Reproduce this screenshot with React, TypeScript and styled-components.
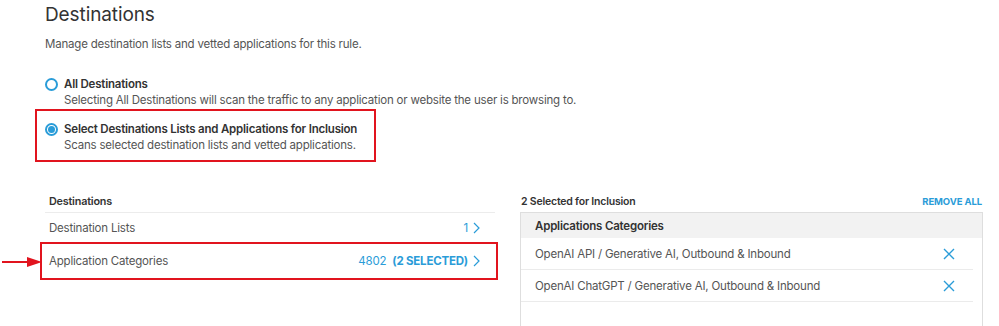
import React from "react";
import styled, { createGlobalStyle } from "styled-components";

const GlobalStyle = createGlobalStyle`
  html, body {
    margin: 0;
    padding: 0;
    background: #ffffff;
  }
  body {
    font-family: Inter, "Noto Sans", "Liberation Sans", sans-serif;
    color: #444;
    letter-spacing: -0.2px;
    -webkit-font-smoothing: antialiased;
  }
`;

const BLUE = "#2a9cd8";
const RED = "#e1141e";

export const Page = styled.div`
  position: relative;
  width: 999px;
  height: 326px;
  overflow: hidden;
  padding: 3px 16px 0 45px;
  box-sizing: border-box;
`;

export const Title = styled.h1`
  margin: 0;
  font-size: 19px;
  line-height: 24px;
  font-weight: 400;
  letter-spacing: -0.1px;
  color: #333;
`;

export const Subtitle = styled.p`
  margin: 9px 0 0;
  font-size: 11.5px;
  line-height: 16px;
  color: #555;
`;

export const Options = styled.div`
  display: flex;
  flex-direction: column;
  align-items: flex-start;
  gap: 13px;
  margin-top: 24px;
`;

export const Option = styled.div<{ $highlighted?: boolean }>`
  display: flex;
  align-items: flex-start;
  gap: 6px;

  ${({ $highlighted }) =>
    $highlighted &&
    `
    border: 2px solid ${RED};
    padding: 10px 17px 7px 8px;
    margin: -12px 0 0 -10px;
  `}
`;

export const Radio = styled.span<{ $checked?: boolean }>`
  flex: none;
  width: 13px;
  height: 13px;
  margin-top: 2px;
  box-sizing: border-box;
  border-radius: 50%;
  border: 2px solid ${BLUE};
  display: flex;
  align-items: center;
  justify-content: center;

  &::after {
    content: "";
    width: 7px;
    height: 7px;
    border-radius: 50%;
    background: ${BLUE};
    display: ${({ $checked }) => ($checked ? "block" : "none")};
  }
`;

export const OptionText = styled.div`
  display: flex;
  flex-direction: column;
`;

export const OptionLabel = styled.span`
  font-size: 11.5px;
  line-height: 16px;
  font-weight: 600;
  color: #333;
`;

export const OptionDesc = styled.span`
  font-size: 11.5px;
  line-height: 16px;
  color: #555;
`;

export const Columns = styled.div`
  display: grid;
  grid-template-columns: 450px 463px;
  column-gap: 25px;
  margin-top: 31px;
`;

export const Column = styled.div`
  display: flex;
  flex-direction: column;
`;

export const SectionHead = styled.div`
  display: flex;
  justify-content: space-between;
  align-items: center;
  height: 16px;
  padding: 0 1px 3px;
  font-size: 10.5px;
  font-weight: 600;
  color: #333;
`;

export const TableHead = styled(SectionHead)`
  padding: 0 4px 3px;
  font-size: 10.8px;
  border-bottom: 1px solid #ececec;
`;

export const RemoveAll = styled.span`
  font-size: 9.5px;
  font-weight: 700;
  color: ${BLUE};
  letter-spacing: -0.1px;
`;

export const ListRow = styled.div<{ $highlighted?: boolean }>`
  position: relative;
  display: flex;
  align-items: center;
  justify-content: space-between;
  height: 30px;
  padding: 0 15px 0 4px;
  font-size: 11.5px;
  color: #555;

  ${({ $highlighted }) =>
    $highlighted &&
    `
    height: 34px;
    border: 2px solid ${RED};
    margin: -1px -3px 0 -5px;
    padding: 0 16px 0 7px;
  `}
`;

export const RowValue = styled.span`
  display: flex;
  align-items: center;
  gap: 5px;
  color: ${BLUE};
`;

export const SelectedTag = styled.span`
  font-weight: 700;
  margin-left: 3px;
`;

export const Pointer = styled.svg`
  position: absolute;
  left: -40px;
  top: 50%;
  margin-top: -4px;
`;

export const Panel = styled.div`
  height: 200px;
  border: 1px solid #dedede;
  border-bottom: none;
`;

export const PanelHead = styled.div`
  height: 25px;
  display: flex;
  align-items: center;
  padding: 0 14px;
  background: #f2f2f2;
  font-size: 11.5px;
  font-weight: 600;
  color: #333;
`;

export const PanelRow = styled.div`
  display: flex;
  align-items: center;
  justify-content: space-between;
  margin-right: 9px;
  padding: 0 18px 0 14px;
  box-sizing: border-box;
  height: 32px;
  border-bottom: 1px solid #ebebeb;
  font-size: 11.5px;
  color: #555;
`;

export const RemoveButton = styled.button`
  border: none;
  background: none;
  padding: 0;
  display: flex;
  cursor: pointer;
`;

const Chevron = () => (
  <svg width="7" height="12" viewBox="0 0 7 12" fill="none">
    <path d="M1 1 L6 6 L1 11" stroke={BLUE} strokeWidth="1.2" />
  </svg>
);

const Cross = () => (
  <svg width="12" height="12" viewBox="0 0 12 12" fill="none">
    <path d="M1 1 L11 11 M11 1 L1 11" stroke={BLUE} strokeWidth="1.4" />
  </svg>
);

const selected = [
  "OpenAI API / Generative AI, Outbound & Inbound",
  "OpenAI ChatGPT / Generative AI, Outbound & Inbound",
];

const App = () => {
  return (
    <Page>
      <GlobalStyle />
      <Title>Destinations</Title>
      <Subtitle>
        Manage destination lists and vetted applications for this rule.
      </Subtitle>

      <Options>
        <Option>
          <Radio />
          <OptionText>
            <OptionLabel>All Destinations</OptionLabel>
            <OptionDesc>
              Selecting All Destinations will scan the traffic to any
              application or website the user is browsing to.
            </OptionDesc>
          </OptionText>
        </Option>
        <Option $highlighted>
          <Radio $checked />
          <OptionText>
            <OptionLabel>
              Select Destinations Lists and Applications for Inclusion
            </OptionLabel>
            <OptionDesc>
              Scans selected destination lists and vetted applications.
            </OptionDesc>
          </OptionText>
        </Option>
      </Options>

      <Columns>
        <Column>
          <TableHead>Destinations</TableHead>
          <ListRow>
            <span>Destination Lists</span>
            <RowValue>
              1
              <Chevron />
            </RowValue>
          </ListRow>
          <ListRow $highlighted>
            <Pointer width="40" height="10" viewBox="0 0 40 10">
              <line x1="0" y1="5" x2="28" y2="5" stroke={RED} strokeWidth="2" />
              <polygon points="25,0 40,5 25,10" fill={RED} />
            </Pointer>
            <span>Application Categories</span>
            <RowValue>
              <span>
                4802 <SelectedTag>(2 SELECTED)</SelectedTag>
              </span>
              <Chevron />
            </RowValue>
          </ListRow>
        </Column>

        <Column>
          <SectionHead>
            <span>2 Selected for Inclusion</span>
            <RemoveAll>REMOVE ALL</RemoveAll>
          </SectionHead>
          <Panel>
            <PanelHead>Applications Categories</PanelHead>
            {selected.map((name) => (
              <PanelRow key={name}>
                <span>{name}</span>
                <RemoveButton aria-label={`Remove ${name}`}>
                  <Cross />
                </RemoveButton>
              </PanelRow>
            ))}
          </Panel>
        </Column>
      </Columns>
    </Page>
  );
};

export default App;
